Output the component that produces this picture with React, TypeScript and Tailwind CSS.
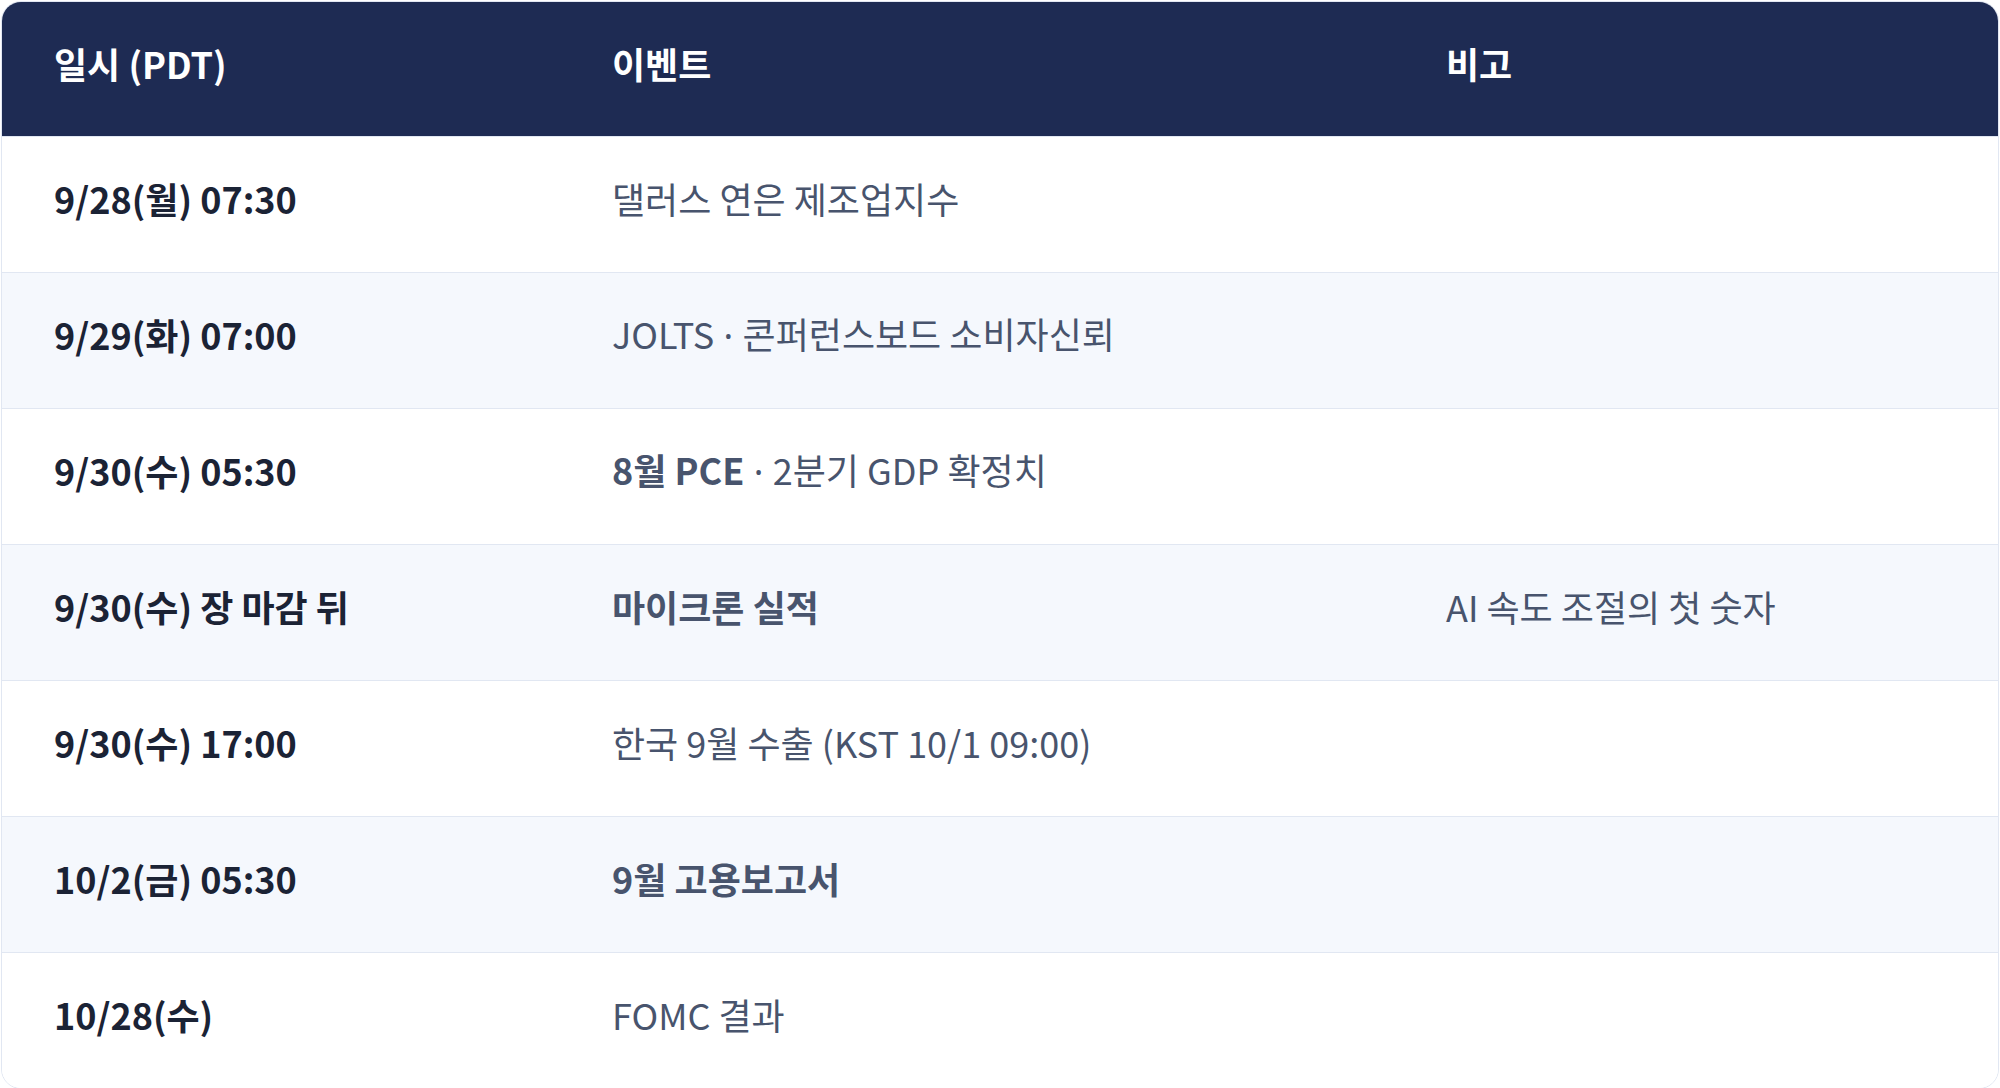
import React from 'react';

type Row = {
  date: string;
  event: React.ReactNode;
  note?: string;
};

const Dot = () => <span className="font-['Noto_Sans']"> · </span>;

const rows: Row[] = [
  { date: '9/28(월) 07:30', event: '댈러스 연은 제조업지수' },
  {
    date: '9/29(화) 07:00',
    event: (
      <>
        JOLTS<Dot />콘퍼런스보드 소비자신뢰
      </>
    ),
  },
  {
    date: '9/30(수) 05:30',
    event: (
      <>
        <span className="font-bold">8월 PCE</span>
        <Dot />
        2분기 GDP 확정치
      </>
    ),
  },
  {
    date: '9/30(수) 장 마감 뒤',
    event: <span className="font-bold">마이크론 실적</span>,
    note: 'AI 속도 조절의 첫 숫자',
  },
  { date: '9/30(수) 17:00', event: '한국 9월 수출 (KST 10/1 09:00)' },
  { date: '10/2(금) 05:30', event: <span className="font-bold">9월 고용보고서</span> },
  { date: '10/28(수)', event: 'FOMC 결과' },
];

export default function App() {
  return (
    <div
      className="min-h-screen bg-white p-px"
      style={{ fontFamily: '"Noto Sans CJK KR", "Noto Sans", sans-serif' }}
    >
      <div className="overflow-hidden rounded-[20px] border border-[#e1e7f2]">
        <table className="w-full border-collapse text-left">
          <colgroup>
            <col className="w-[558px]" />
            <col className="w-[834px]" />
            <col />
          </colgroup>
          <thead>
            <tr className="h-[134px] bg-[#1e2b53] text-[36px] leading-none font-bold text-white">
              <th className="pb-[12px] pl-[52px] font-bold">일시 (PDT)</th>
              <th className="pb-[12px] pl-[52px] font-bold">이벤트</th>
              <th className="pb-[12px] pl-[52px] font-bold">비고</th>
            </tr>
          </thead>
          <tbody>
            {rows.map((row, i) => (
              <tr
                key={row.date}
                className={`h-[136px] border-t border-[#e1e7f2] text-[36px] leading-none ${
                  i % 2 === 1 ? 'bg-[#f5f8fd]' : 'bg-white'
                }`}
              >
                <td className="pb-[12px] pl-[52px] font-bold text-[#1b2335]">{row.date}</td>
                <td className="pb-[12px] pl-[52px] text-[#48546d]">{row.event}</td>
                <td className="pb-[12px] pl-[52px] text-[#48546d]">{row.note}</td>
              </tr>
            ))}
          </tbody>
        </table>
      </div>
    </div>
  );
}
